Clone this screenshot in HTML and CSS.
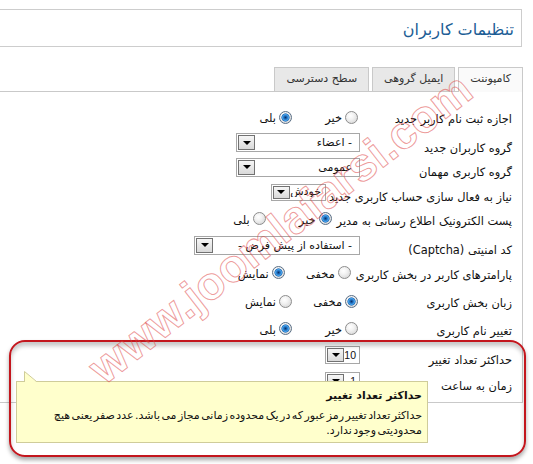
FILE: index.html
```html
<!DOCTYPE html>
<html lang="fa" dir="rtl">
<head>
<meta charset="utf-8">
<title>تنظیمات کاربران</title>
<link rel="stylesheet" href="styles.css">
</head>
<body>
<div class="page">
  <div class="header"><h1 class="title">تنظیمات کاربران</h1></div>

  <div class="tabs">
    <div class="tab active">کامپوننت</div>
    <div class="tab">ایمیل گروهی</div>
    <div class="tab">سطح دسترسی</div>
  </div>

  <div class="panel">
    <div class="row h26">
      <label class="key">اجازه ثبت نام کاربر جدید</label>
      <div class="radios">
        <span class="opt"><i class="radio"></i>خیر</span>
        <span class="opt"><i class="radio on"></i>بلی</span>
      </div>
    </div>
    <div class="row sel h25">
      <label class="key">گروه کاربران جدید</label>
      <div class="select w124"><span class="val">- اعضاء</span><span class="btn"></span></div>
    </div>
    <div class="row sel h24">
      <label class="key">گروه کاربری مهمان</label>
      <div class="select w124"><span class="val">عمومی</span><span class="btn"></span></div>
    </div>
    <div class="row sel h26">
      <label class="key">نیاز به فعال سازی حساب کاربری جدید</label>
      <div class="select small w55"><span class="val top">خودش</span><span class="btn"></span></div>
    </div>
    <div class="row h27">
      <label class="key">پست الکترونیک اطلاع رسانی به مدیر</label>
      <div class="radios">
        <span class="opt"><i class="radio on"></i>خیر</span>
        <span class="opt"><i class="radio"></i>بلی</span>
      </div>
    </div>
    <div class="row sel h26">
      <label class="key">کد امنیتی (Captcha)</label>
      <div class="select w166"><span class="val">- استفاده از پیش فرض -</span><span class="btn"></span></div>
    </div>
    <div class="row h29">
      <label class="key">پارامترهای کاربر در بخش کاربری</label>
      <div class="radios">
        <span class="opt"><i class="radio"></i>مخفی</span>
        <span class="opt"><i class="radio on"></i>نمایش</span>
      </div>
    </div>
    <div class="row h28">
      <label class="key">زبان بخش کاربری</label>
      <div class="radios">
        <span class="opt"><i class="radio on"></i>مخفی</span>
        <span class="opt"><i class="radio"></i>نمایش</span>
      </div>
    </div>
    <div class="row h27">
      <label class="key">تغییر نام کاربری</label>
      <div class="radios">
        <span class="opt"><i class="radio"></i>خیر</span>
        <span class="opt"><i class="radio on"></i>بلی</span>
      </div>
    </div>
    <div class="row sel h26">
      <label class="key">حداکثر تعداد تغییر</label>
      <div class="select tiny w35"><span class="val num">10</span><span class="btn"></span></div>
    </div>
    <div class="row sel h26">
      <label class="key">زمان به ساعت</label>
      <div class="select tiny w35"><span class="val num">1</span><span class="btn"></span></div>
    </div>
  </div>

  <div class="callout"></div>

  <div class="tip">
    <svg class="tail" width="13" height="11" viewBox="0 0 13 11">
      <polygon points="0.5,11 0.5,0.5 12.5,11" fill="#ffffcc"/>
      <polyline points="0.5,11 0.5,0.5 12.5,10.5" fill="none" stroke="#cfcc9a" stroke-width="1"/>
    </svg>
    <div class="tip-title">حداکثر تعداد تغییر</div>
    <div class="tip-text">حداکثر تعداد تغییر رمز عبور که در یک محدوده زمانی مجاز می باشد. عدد صفر یعنی هیچ محدودیتی وجود ندارد.</div>
  </div>

  <div class="wm">www.joomlafarsi.com</div>
</div>
</body>
</html>
```

FILE: styles.css
```css
* { box-sizing: border-box; }

body {
  margin: 0;
  background: #fff;
  font-family: "DejaVu Sans", sans-serif;
  font-size: 11px;
  color: #111;
}

.page {
  position: relative;
  width: 533px;
  height: 464px;
  overflow: hidden;
}

/* header */
.header {
  margin: 9px 11px 0 0;
  height: 38px;
  border: 1px solid #cdcdcd;
  border-left: none;
  display: flex;
  align-items: center;
  padding: 2px 7px 0 0;
}
.title {
  margin: 0;
  font-size: 16px;
  font-weight: normal;
  color: #1c5d95;
}

/* tabs */
.tabs {
  display: flex;
  align-items: flex-start;
  gap: 3px;
  height: 25px;
  margin: 20px 10px -1px 0;
  position: relative;
  z-index: 1;
}
.tab {
  height: 24px;
  padding: 0 11px;
  border: 1px solid #c9c9c9;
  border-bottom: none;
  background: #e8e8e8;
  line-height: 22px;
  color: #333;
  white-space: nowrap;
}
.tab.active {
  height: 25px;
  background: #fafafa;
}

/* panel */
.panel {
  margin-right: 10px;
  border-top: 1px solid #c9c9c9;
  border-right: 1px solid #c9c9c9;
  border-bottom: 1px solid #c9c9c9;
  padding: 12px 10px 8px 0;
  font-size: 11.4px;
}

.row {
  display: flex;
  align-items: center;
  gap: 3px;
}
.h24 { height: 24px; }
.h25 { height: 25px; }
.h26 { height: 26px; }
.h27 { height: 27px; }
.h28 { height: 28px; }
.h29 { height: 29px; }

.key {
  min-width: 149px;
  white-space: nowrap;
  padding-top: 4px;
}
.row.sel .key { padding-top: 10px; }

/* radios */
.radios { display: flex; }
.opt {
  width: 66px;
  display: flex;
  align-items: center;
  gap: 3px;
  white-space: nowrap;
  padding-top: 2px;
}
.radio {
  flex: none;
  width: 13px;
  height: 13px;
  margin-right: 2px;
  margin-top: -2px;
  border-radius: 50%;
  border: 1px solid #8d8d8d;
  background: radial-gradient(circle at 40% 35%, #ffffff 0, #f3f3f3 35%, #cfcfcf 100%);
}
.radio.on {
  border-color: #5a6f86;
  background:
    radial-gradient(circle at 50% 50%, #0b2f63 0, #1b68b8 1.5px, #47a3ea 3px, #2a6fb8 3.8px, rgba(42,111,184,0) 4.4px),
    radial-gradient(circle at 40% 35%, #ffffff 0, #f3f3f3 35%, #cfcfcf 100%);
}

/* selects */
.select {
  display: flex;
  align-items: center;
  height: 19px;
  padding: 1px;
  border: 1px solid #a7a7a7;
  background: #fff;
  font-size: 11px;
}
.select .val {
  flex: 1;
  padding-right: 6px;
  white-space: nowrap;
  overflow: hidden;
}
.select .btn {
  flex: none;
  width: 17px;
  height: 15px;
  border: 1px solid #727272;
  background: linear-gradient(#f6f6f6, #d9d9d9);
  display: flex;
  align-items: center;
  justify-content: center;
}
.select .btn::after {
  content: "";
  border-top: 4px solid #000;
  border-left: 4px solid transparent;
  border-right: 4px solid transparent;
}
.w35 { width: 35px; }
.w55 { width: 55px; }
.w124 { width: 124px; }
.w166 { width: 166px; }
.select.small { height: 17px; }
.select.small .btn { height: 13px; }
.select.tiny { height: 18px; }
.select.tiny .btn { height: 14px; }
.val.top {
  align-self: flex-start;
  line-height: 11px;
  padding-right: 3px;
}
.val.num {
  padding-right: 2px;
  overflow: visible;
  font-family: "Liberation Sans", sans-serif;
  font-size: 10.5px;
}

/* annotation */
.callout {
  position: absolute;
  left: 9px;
  top: 340px;
  width: 517px;
  height: 117px;
  border: 2px solid #c3161d;
  border-radius: 16px;
  box-shadow: 0 3px 4px rgba(0, 0, 0, 0.35), inset 0 4px 4px rgba(0, 0, 0, 0.22);
  z-index: 2;
}

/* tooltip */
.tip {
  position: absolute;
  left: 16px;
  top: 381px;
  width: 412px;
  height: 62px;
  padding: 6px 5px 0 4px;
  background: #ffffcc;
  border: 1px solid #cfcc9a;
  z-index: 3;
  color: #111;
}
.tail {
  position: absolute;
  top: -11px;
  left: 7px;
  display: block;
}
.tip-title {
  font-weight: bold;
  line-height: 16px;
}
.tip-text {
  margin-top: 4px;
  line-height: 15px;
  word-spacing: -2px;
}

/* watermark */
.wm {
  position: absolute;
  left: 30px;
  top: 203px;
  width: 500px;
  line-height: 50px;
  text-align: center;
  direction: ltr;
  white-space: nowrap;
  font-family: "Liberation Sans", sans-serif;
  font-size: 46px;
  font-weight: bold;
  color: transparent;
  -webkit-text-stroke: 1px rgba(222, 70, 70, 0.55);
  transform: rotate(-38deg);
  z-index: 4;
  pointer-events: none;
}
```
